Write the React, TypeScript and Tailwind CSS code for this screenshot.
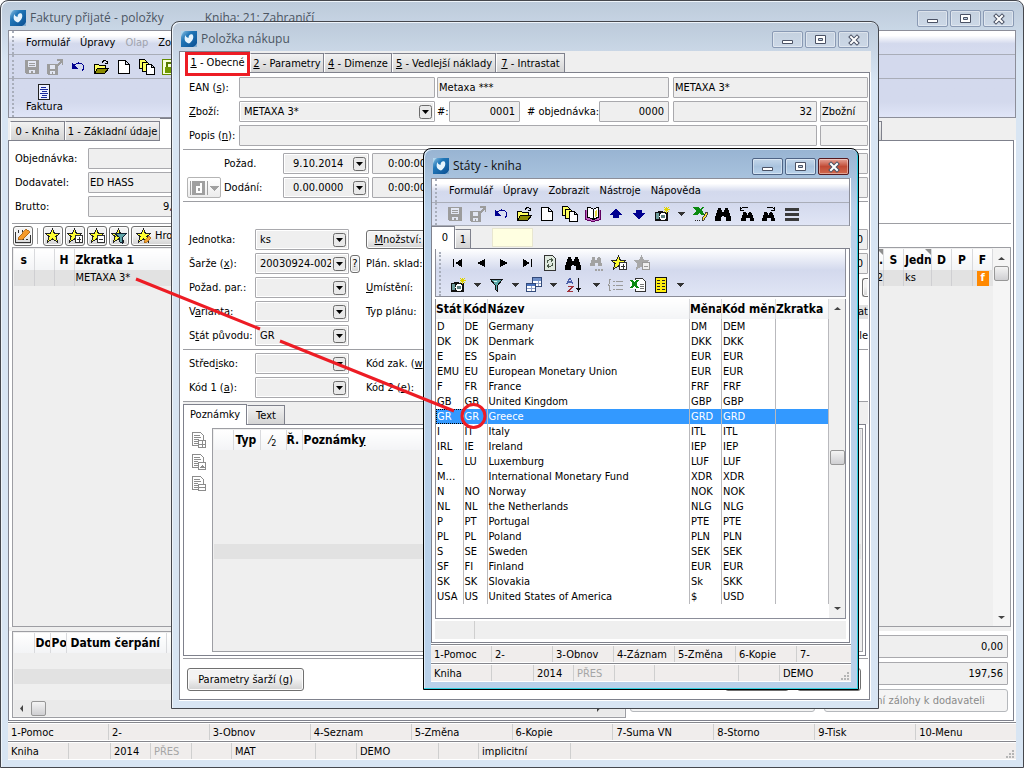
import React from 'react';

type Kids = { children?: React.ReactNode };

/* ---------- icons ---------- */

const binoculars = (c: string) => (
  <path fill={c} d="M3 2h3v2h1v2h2V4h1V2h3v2h1v3h1v3h1v5h-5v-4H9v-1H7v1H6v4H0v-5h1V7h1V4h1z" />
);
const star = (c: string, s: string) => (
  <path d="M7.5 1L9.500 5.500H14.500L11 8.500L12.500 14L7.500 11L2.500 14L4 8.500L.5 5.500H5.500z" fill={c} stroke={s} />
);

const art: Record<string, React.ReactNode> = {
  save: (
    <>
      <path fill="#9c9c9c" d="M1 1h14v14H2l-1-1z" />
      <path fill="#e3e7f3" d="M4 2h8v6H4zM5 11h6v3H9v-2H7v2H5z" />
      <path fill="#9c9c9c" d="M5 4h6v1H5zM5 6h6v1H5z" />
    </>
  ),
  export: (
    <>
      <path fill="#9c9c9c" d="M0 5h11v11H1l-1-1zM10 0h6v6h-1V3l-4 4-2-1 4-4h-3z" />
      <path fill="#e3e7f3" d="M3 6h5v4H3zM3 12h5v3H6v-2H5v2H3z" />
    </>
  ),
  undo: (
    <>
      <path d="M3 8c2-4 6-5 9-3 2 2 2 5 0 7" fill="none" stroke="#000090" />
      <path d="M2 4v6h6z" fill="#000090" />
    </>
  ),
  open: (
    <>
      <path d="M1.500 14V5.500h4l1 1h6V9" fill="#ffff60" stroke="#000" />
      <path d="M1.500 14.500l3-5h11l-4 5z" fill="#8a8a00" stroke="#000" />
      <path d="M9 3.500c2-3 4-2 5.500 0m0-2v3h-3" fill="none" stroke="#000" />
    </>
  ),
  doc: <path d="M2.500 1.500h7l4 4v9h-11zM9.500 1.500v4h4" fill="#fff" stroke="#000" />,
  copies: (
    <>
      <path d="M.5.5h5l2 2v7h-7z" fill="#ffff60" stroke="#000" />
      <path d="M3.500 3.500h5l2 2v7h-7z" fill="#ffff60" stroke="#000" />
      <path d="M7.500 5.500h5l3 3v7h-8zM12.500 5.500v3h3" fill="#fff" stroke="#000" />
    </>
  ),
  green: (
    <>
      <path d="M.5.5h14v15H.5z" fill="#f6ffd8" stroke="#668c00" />
      <path d="M3 8h9v6H3z" fill="#6f9a00" />
      <path d="M5 8V4h5v4" fill="none" stroke="#557a00" strokeWidth="2" />
    </>
  ),
  book: (
    <>
      <path d="M.5 3.500v10l7 2h1l7-2v-10" fill="#c060c0" stroke="#600060" />
      <path d="M2.500 1.500c3-1 4 1 6 2v10c-2-1-3-2-6-2z" fill="#fff" stroke="#000" />
      <path d="M8.500 3.500c2-2 4-2 5-2v10c-2 0-3 1-5 2z" fill="#fff" stroke="#000" />
      <path d="M10 5l2-1v6l-2 1z" fill="#e5d840" />
    </>
  ),
  up: <path fill="#000090" d="M8 3l7 6h-4v3H5V9H1z" />,
  down: <path fill="#000090" d="M8 13l7-6h-4V4H5v3H1z" />,
  camera: (
    <>
      <path fill="#111" d="M1 6h3V5h5v1h5v9H1z" />
      <path fill="#6d9c9c" d="M2 7h3v6H2z" />
      <circle cx="9" cy="10.500" r="3.500" fill="#fff" />
      <circle cx="9" cy="10.500" r="2" fill="#5d8080" />
      <path d="M12.500 1v6M10 3.500h6M10 1l5 5M15 1l-5 5" stroke="#e0d400" />
    </>
  ),
  caret: <path fill="#333" d="M4 6h8L8 10z" />,
  excelpen: (
    <>
      <path fill="#0a8a10" d="M1 1h5l2 2 2-2h2l-2 3 3 5H9L7 7 5 9H1l3-4z" />
      <path d="M10 13l4-7 2 1-4 7-2 1z" fill="#ffe040" stroke="#222" strokeWidth=".8" />
      <path stroke="#222" strokeDasharray="1 1" d="M3 14.500h6" />
    </>
  ),
  find: binoculars('#000'),
  findgray: (
    <>
      <g transform="translate(2 0) scale(.75)">{binoculars('#a2a2a2')}</g>
      <path fill="#a2a2a2" d="M7 14h2v2H7zM10 14h2v2h-2zM13 14h2v2h-2z" />
    </>
  ),
  findprev: (
    <>
      <g transform="translate(3 4) scale(.8 .75)">{binoculars('#000')}</g>
      <path d="M2.500 1v3.500H6M2.500 3.500c2-3 6-3 8-1" fill="none" stroke="#000" />
    </>
  ),
  findnext: (
    <>
      <g transform="translate(1 4) scale(.8 .75)">{binoculars('#000')}</g>
      <path d="M13.500 1v3.500H10M13.500 3.500c-2-3-6-3-8-1" fill="none" stroke="#000" />
    </>
  ),
  lines: <path fill="#3a3a3a" d="M1 2h14v3H1zM1 7h14v3H1zM1 12h14v3H1z" />,
  first: <path fill="#000" d="M3 4h1v8H3zM12 4v8L5 8z" />,
  prev: <path fill="#000" d="M12 4v8L4 8z" />,
  next: <path fill="#000" d="M4 4v8l8-4z" />,
  last: <path fill="#000" d="M12 4h1v8h-1zM4 4v8l7-4z" />,
  refresh: (
    <>
      <path d="M2.500.5h8l3 3v12h-11z" fill="#dfe9df" stroke="#333" />
      <path d="M5 8c0-3 3-4 5-3M11 8c0 3-3 4-5 3" fill="none" stroke="#4a5a4a" />
      <path d="M9 3l3 2-3 2zM7 9l-3 2 3 2z" fill="#4a5a4a" />
    </>
  ),
  star: star('#ffff30', '#222'),
  starplus: (
    <>
      {star('#ffff30', '#222')}
      <path d="M8.500 7.500h7v7h-7z" fill="#fff" stroke="#333" />
      <path d="M12 9v5M10 11.500h4" stroke="#333" />
    </>
  ),
  starminus: (
    <>
      {star('#ffff30', '#222')}
      <path d="M8.500 7.500h7v7h-7z" fill="#fff" stroke="#333" />
      <path d="M10 11.500h4" stroke="#333" />
    </>
  ),
  starminusgray: (
    <>
      {star('#a8a8a8', '#a8a8a8')}
      <path d="M8.500 7.500h7v7h-7z" fill="#eee" stroke="#999" />
      <path d="M10 11.500h4" stroke="#999" />
    </>
  ),
  starfilter: (
    <>
      {star('#ffff30', '#222')}
      <path d="M3.500 5.500h12l-4 4v6l-3-2v-4z" fill="#5fa5a8" stroke="#123" />
    </>
  ),
  starpen: (
    <>
      {star('#ffff30', '#222')}
      <path d="M9 12l4-4 2 2-4 4-3 1z" fill="#f0a030" stroke="#a06010" strokeWidth=".7" />
    </>
  ),
  edit: (
    <>
      <path d="M.5 4v10.500h15V7M3.500 2v3M7.500 2v2M3 11.500h2m2 0h2m2 0h2" fill="none" stroke="#333" />
      <path d="M4 9l7-8 4 3-7 7-5 1z" fill="#f59a2a" stroke="#a86010" strokeWidth=".8" />
    </>
  ),
  filter: (
    <>
      <path d="M2.500 2.500h12l-5 6v6l-2-2v-4z" fill="#58a6a6" stroke="#111" />
      <path d="M5 4h4v1H6z" fill="#d7f2f2" />
    </>
  ),
  tables: (
    <>
      <path d="M6.500.5h9v9h-9z" fill="#fff" stroke="#334a7a" />
      <path d="M7 1h8v3H7z" fill="#6f8fc8" />
      <path d="M.5 6.500h9v8h-9z" fill="#fff" stroke="#334a7a" />
      <path d="M1 7h8v2H1z" fill="#4b73bd" />
      <path d="M1 11.500h8M5.500 9v5M10 6.500h5M12.500 4v5" stroke="#8fa0c8" />
    </>
  ),
  sort: (
    <>
      <path d="M1 7l3-6 3 6M2 5h4" fill="none" stroke="#4b5fa8" strokeWidth="1.300" />
      <path d="M2 9.500h5l-5 5h5" fill="none" stroke="#a03038" strokeWidth="1.300" />
      <path d="M12.500 1v12" stroke="#111" />
      <path d="M10 11h5l-2.500 4z" fill="#111" />
    </>
  ),
  list: (
    <path d="M4 2.500H2.500v4L1 8l1.500 1v4.500H4M6 4.500h2m1 0h7M6 8.500h2m1 0h7M6 12.500h2m1 0h7" fill="none" stroke="#9a9a9a" />
  ),
  excel: (
    <>
      <path d="M5.500 1.500h7l3 3v10h-10z" fill="#fff" stroke="#333" />
      <path d="M10 7.500h4M10 9.500h4M10 11.500h4" stroke="#777" />
      <path d="M0 3h9v9H0z" fill="#fff" />
      <path d="M1 3l7 8M8 3l-7 8" stroke="#0a8a10" strokeWidth="2.400" />
    </>
  ),
  yellow: (
    <>
      <path d="M2.500.5h11v15h-11z" fill="#ffee10" stroke="#111" />
      <path d="M4 3.500h3M4 6.500h3M4 9.500h3M4 12.500h3M9 3.500h3M9 6.500h3M9 9.500h3M9 12.500h3" stroke="#222" />
    </>
  ),
  invoice: (
    <>
      <path d="M2.500.5h11v15h-11z" fill="#eef1ff" stroke="#222" />
      <path d="M5 3.500h5M4 5.500h8M6 7.500h5M4 9.500h8M6 11.500h5M5 13.500h6" stroke="#1a2a9a" />
    </>
  ),
  note1: (
    <>
      <path d="M.5.500h8l3 3v10h-11z" fill="#fff" stroke="#8c8c8c" />
      <path d="M2 3.500h6M2 5.500h7M2 7.500h5M2 9.500h4M2 11.500h4" stroke="#8c8c8c" />
      <path d="M6.500 8.500h7v7h-7zM10.500 8v8M6 12.500h8" fill="#fff" stroke="#8c8c8c" />
    </>
  ),
  note2: (
    <>
      <path d="M.5.500h8l3 3v10h-11z" fill="#fff" stroke="#8c8c8c" />
      <path d="M2 3.500h6M2 5.500h7M2 7.500h4M2 9.500h4M2 11.500h4" stroke="#8c8c8c" />
      <path d="M6.500 8.500h7v7h-7z" fill="#fff" stroke="#8c8c8c" />
      <path d="M8 14l2-3 3 3z" fill="#8c8c8c" />
    </>
  ),
  note3: (
    <>
      <path d="M.5.500h8l3 3v10h-11z" fill="#fff" stroke="#8c8c8c" />
      <path d="M2 3.500h6M2 5.500h7M2 7.500h4M2 9.500h4M2 11.500h4" stroke="#8c8c8c" />
      <path d="M6.500 8.500h7v6h-7zM6 11.500h8" fill="#fff" stroke="#8c8c8c" />
    </>
  ),
};

const Icon = ({ name }: { name: string }) => (
  <svg viewBox="0 0 16 16" shapeRendering="crispEdges" className="size-4 shrink-0" aria-hidden="true">
    {art[name]}
  </svg>
);

const Logo = () => (
  <svg viewBox="0 0 16 16" className="size-4 shrink-0" aria-hidden="true">
    <defs>
      <linearGradient id="logo" x1="0" y1="0" x2="1" y2="1">
        <stop offset="0" stopColor="#8fc3e4" />
        <stop offset=".35" stopColor="#2177b8" />
        <stop offset="1" stopColor="#0b4f92" />
      </linearGradient>
    </defs>
    <path fill="url(#logo)" d="M0 0h16v16H0z" />
    <path fill="#e6f4fd" d="M8 12.500C4 11.500 2.500 8 4.500 4c0 1.500 1.500 2.500 3 3C7.500 4 9.500 2.500 11.500 3.500c2 2.500 0 7-3.500 9z" />
    <path fill="#d6ebf8" d="M0 0h4C2 1 1 3 0 6zM12 16c2-1 3-2 4-4v4z" opacity=".6" />
  </svg>
);

const Grip = () => (
  <span className="mr-1 ml-[3px] w-[3px] self-stretch border-l-2 border-dotted border-[#a8aebb]" />
);

/* ---------- window parts ---------- */

const CaptionButtons = ({ active }: { active?: boolean }) => {
  const tone = active
    ? 'border-[#4f6485] bg-linear-to-b from-[#c4d7ea] via-[#a9c3de] to-[#b9d2ea]'
    : 'border-[#8a9ab4] bg-linear-to-b from-[#c5d1df] to-[#ccd8e7]';
  const close = active
    ? 'border-[#561a20] bg-linear-to-b from-[#e5a297] via-[#c14a35] to-[#d0684d]'
    : 'border-[#8a9ab4] bg-linear-to-b from-[#c5d1df] to-[#ccd8e7]';
  const base = 'flex h-[17px] w-[31px] items-center justify-center rounded-[2px] border shadow-[inset_0_0_0_1px_#ffffff66]';
  return (
    <div className="flex gap-[2px]">
      <button className={`${base} ${tone}`} aria-label="Minimalizovat">
        <svg viewBox="0 0 14 12" className="h-3 w-3.5"><path d="M1.500 6.500h10v3h-10z" fill="#fff" stroke="#4b5265" /></svg>
      </button>
      <button className={`${base} ${tone}`} aria-label="Maximalizovat">
        <svg viewBox="0 0 14 12" className="h-3 w-3.5">
          <path d="M1.500 1.500h10v8h-10z" fill="#fff" stroke="#4b5265" />
          <path d="M4.500 4.500h4v2h-4z" fill="#bfd0e0" stroke="#4b5265" />
        </svg>
      </button>
      <button className={`${base} ${close}`} aria-label="Zavřít">
        <svg viewBox="0 0 14 12" className="h-3 w-3.5">
          <path d="M4 3l6 6M10 3L4 9" stroke="#4b5265" strokeWidth="4" strokeLinecap="square" />
          <path d="M4 3l6 6M10 3L4 9" stroke="#fff" strokeWidth="2" strokeLinecap="square" />
        </svg>
      </button>
    </div>
  );
};

const Frame = ({ title, extra, active, className, children }: Kids & { title: string; extra?: string; active?: boolean; className: string }) => (
  <section
    aria-label={title}
    className={`isolate flex flex-col overflow-hidden rounded-t-lg border px-[7px] pb-[7px] ${
      active
        ? 'border-black bg-[#bbd2eb] bg-linear-to-b from-[#98b4d2] to-[#b9d1ea] to-[60px] shadow-[inset_-1px_-1px_0_#30d0e0,inset_1px_1px_0_#dcebf8]'
        : 'border-[#45474d] bg-[#d8e5f3] bg-linear-to-b from-[#bccada] to-[#d8e5f3] to-[60px] shadow-[inset_1px_1px_0_#eef4fa]'
    } ${className}`}
  >
    <header className="flex h-[29px] shrink-0 items-start px-[2px] pt-[9px]">
      <Logo />
      <h1 className={`ml-1 font-['Open_Sans','Noto_Sans',sans-serif] text-xs leading-4 whitespace-nowrap ${active ? 'text-[#111]' : 'text-[#4c5663]'}`}>{title}</h1>
      {extra && <span className="ml-[41px] font-['Open_Sans','Noto_Sans',sans-serif] text-xs leading-4 whitespace-nowrap text-[#4c5663]">{extra}</span>}
      <div className="ml-auto"><CaptionButtons active={active} /></div>
    </header>
    <div className="flex min-h-0 flex-1 flex-col bg-white">{children}</div>
  </section>
);

const MenuBar = ({ items, disabled }: { items: string[]; disabled?: string }) => (
  <nav className="flex h-6 items-center border-b border-[#a9adb8] bg-linear-to-b from-white from-20% via-[#d3d9ed] via-55% to-[#d6dcef]">
    <Grip />
    <div className="ml-[7px] flex gap-[10px] pt-px">
      {items.map((i) => (
        <button key={i} className={i === disabled ? 'text-[#a0a3ad]' : ''}>{i}</button>
      ))}
    </div>
  </nav>
);

const Tool = ({ name, w = 'w-[23px]' }: { name: string; w?: string }) => (
  <button aria-label={name} className={`flex h-5 shrink-0 items-center justify-center ${w}`}>
    <Icon name={name} />
  </button>
);
const Caret = () => (
  <button aria-label="více" className="flex h-5 w-[15px] shrink-0 items-center justify-center"><Icon name="caret" /></button>
);

const Tab = ({ on, className = '', children }: Kids & { on?: boolean; className?: string }) => (
  <button
    role="tab"
    aria-selected={!!on}
    className={`shrink-0 border-[#7f818c] whitespace-nowrap ${
      on
        ? 'relative z-10 -mb-px self-stretch border-t border-r bg-white'
        : 'h-[19px] border-t border-r border-l border-l-white bg-linear-to-b from-[#f2f2f2] to-[#d4d4d4] pt-[2px]'
    } ${className}`}
  >
    {children}
  </button>
);

const Cells = ({ cells }: { cells: [string, string][] }) => (
  <div className="flex h-[19px] shrink-0 border-t border-[#85868c] bg-white py-px">
    {cells.map(([text, w], i) => (
      <span
        key={i}
        className={`overflow-hidden border-r border-[#cfcfcf] bg-[#f0edec] px-[3px] leading-[17px] last:border-r-0 ${w} ${text === 'PŘES' ? 'text-[#a5a5a5]' : ''}`}
      >
        {text}
      </span>
    ))}
  </div>
);

const SizeGrip = () => (
  <svg viewBox="0 0 10 10" className="absolute right-px bottom-px size-2.5" aria-hidden="true">
    <path fill="#b5b5b5" d="M7 1h2v2H7zM4 4h2v2H4zM7 4h2v2H7zM1 7h2v2H1zM4 7h2v2H4zM7 7h2v2H7z" />
  </svg>
);

/* ---------- form parts ---------- */

const box = 'h-[21px] min-w-0 rounded-[1px] border border-[#a9a9ad] bg-[#efefef] pr-1 text-black';

const Box = ({ id, label, value = '', pad = 'pl-[2px]', className = '' }: { id: string; label?: string; value?: string; pad?: string; className?: string }) => (
  <input id={id} aria-label={label} defaultValue={value} className={`${box} ${pad} ${className}`} />
);

const Arrow = () => (
  <svg viewBox="0 0 13 14" className="pointer-events-none absolute top-1 right-[3px] h-3.5 w-[13px]" aria-hidden="true">
    <rect x=".5" y=".5" width="12" height="13" rx="2" fill="#e9e9e9" stroke="#6c6c6c" />
    <path d="M3 5h7L6.500 9z" fill="#000" />
  </svg>
);

const Combo = ({ id, label, value = '', className = '', inner = 'pl-1' }: { id: string; label?: string; value?: string; className?: string; inner?: string }) => (
  <span className={`relative shrink-0 ${className}`}>
    <select
      id={id}
      aria-label={label}
      defaultValue={value}
      className={`h-[21px] w-full appearance-none overflow-hidden rounded-[1px] border border-[#a9a9ad] bg-[#efefef] pr-[17px] shadow-[inset_0_0_0_1px_#fff] ${inner}`}
    >
      <option>{value}</option>
    </select>
    <Arrow />
  </span>
);

const Lab = ({ htmlFor, className = '', children }: Kids & { htmlFor: string; className?: string }) => (
  <label htmlFor={htmlFor} className={`shrink-0 whitespace-nowrap ${className}`}>{children}</label>
);

const Row = ({ className = '', children }: Kids & { className?: string }) => (
  <div className={`flex h-[21px] shrink-0 items-center ${className}`}>{children}</div>
);

const Rule = ({ className = '' }: { className?: string }) => <hr className={`shrink-0 border-[#9d9ea3] ${className}`} />;

const pushy =
  'rounded-[3px] border border-[#707070] bg-linear-to-b from-[#f3f3f3] from-45% to-[#d2d2d2] shadow-[inset_0_0_0_1px_#fcfcfc]';

const Thumb = () => (
  <span className="block size-[15px] rounded-[2px] border border-[#979797] bg-linear-to-b from-[#f4f4f4] to-[#cfcfd2]" />
);
const Arr = ({ d }: { d: string }) => (
  <svg viewBox="0 0 15 15" className="size-[15px] shrink-0" aria-hidden="true"><path d={d} fill="#444" /></svg>
);
const UP = 'M4 9h7L7.500 6z';
const DOWN = 'M4 6h7L7.500 9z';
const LEFT = 'M9 4v7L6 7.500z';
const RIGHT = 'M6 4v7l3-3.500z';

const headBase = 'overflow-hidden border-r border-[#d9dadd] bg-linear-to-b from-white to-[#f3f4f6] p-0 text-xs font-bold whitespace-nowrap';
const head = `${headBase} text-left`;
const headMid = `${headBase} text-center`;

const Corner = () => (
  <svg viewBox="0 0 6 6" className="absolute top-0 right-0 size-1.5" aria-hidden="true"><path d="M0 0h6v6z" fill="#8f8f8f" /></svg>
);

/* ---------- countries ---------- */

const countries: [string, string, string, string, string][] = [
  ['D', 'DE', 'Germany', 'DM', 'DEM'],
  ['DK', 'DK', 'Denmark', 'DKK', 'DKK'],
  ['E', 'ES', 'Spain', 'EUR', 'EUR'],
  ['EMU', 'EU', 'European Monetary Union', 'EUR', 'EUR'],
  ['F', 'FR', 'France', 'FRF', 'FRF'],
  ['GB', 'GB', 'United Kingdom', 'GBP', 'GBP'],
  ['GR', 'GR', 'Greece', 'GRD', 'GRD'],
  ['I', 'IT', 'Italy', 'ITL', 'ITL'],
  ['IRL', 'IE', 'Ireland', 'IEP', 'IEP'],
  ['L', 'LU', 'Luxemburg', 'LUF', 'LUF'],
  ['M…', '', 'International Monetary Fund', 'XDR', 'XDR'],
  ['N', 'NO', 'Norway', 'NOK', 'NOK'],
  ['NL', 'NL', 'the Netherlands', 'NLG', 'NLG'],
  ['P', 'PT', 'Portugal', 'PTE', 'PTE'],
  ['PL', 'PL', 'Poland', 'PLN', 'PLN'],
  ['S', 'SE', 'Sweden', 'SEK', 'SEK'],
  ['SF', 'FI', 'Finland', 'EUR', 'EUR'],
  ['SK', 'SK', 'Slovakia', 'Sk', 'SKK'],
  ['USA', 'US', 'United States of America', '$', 'USD'],
];

const CountriesWindow = () => (
  <Frame active title="Státy - kniha" className="absolute top-[148px] left-[423px] h-[542px] w-[436px]">
    <div className="mr-px border-x border-t border-[#8c8e99]">
      <MenuBar items={['Formulář', 'Úpravy', 'Zobrazit', 'Nástroje', 'Nápověda']} />
      <div className="flex h-[23px] items-center border-b border-[#a9adb8] bg-linear-to-b from-[#d3d9ed] to-[#e0e5f5]">
        <Grip />
        <div className="ml-px flex items-center">
          {['save', 'export', 'undo', 'open', 'doc', 'copies', 'book', 'up', 'down', 'camera'].map((n) => <Tool key={n} name={n} />)}
          <Caret />
          {['excelpen', 'find', 'findprev', 'findnext', 'lines'].map((n) => <Tool key={n} name={n} />)}
        </div>
      </div>
    </div>
    <div role="tablist" className="flex h-[22px] shrink-0 items-end bg-[#efefef]">
      <Tab on className="w-6 border-l pl-1">0</Tab>
      <Tab className="w-4">1</Tab>
      <input aria-label="Hledat" className="ml-[21px] h-[19px] w-[41px] self-center border border-[#e8e6d0] bg-[#ffffe1]" />
    </div>
    <div className="mr-px flex min-h-0 flex-1 flex-col border border-[#7f818c] px-[3px] pb-[2px]">
      <div className="flex h-12 shrink-0 border border-t-0 border-[#8c8e99] bg-linear-to-b from-white via-[#d3d9ed] via-45% to-[#e0e5f5] pt-[3px]">
        <Grip />
        <div>
          <div className="flex h-[22px] items-center">
            {['first', 'prev', 'next', 'last', 'refresh', 'find', 'findgray', 'starplus', 'starminusgray'].map((n) => <Tool key={n} name={n} />)}
          </div>
          <div className="flex h-[22px] items-center">
            <Tool name="camera" /><Caret />
            <Tool name="filter" /><Caret />
            <Tool name="tables" /><Caret />
            <Tool name="sort" w="w-7" /><Caret />
            <Tool name="list" /><Tool name="excel" /><Tool name="yellow" /><Caret />
          </div>
        </div>
      </div>
      <div className="mt-[2px] flex min-h-0 flex-1 border-r border-b border-l border-[#8c8e99]">
        <div className="min-w-0 flex-1">
          <table className="w-full table-fixed border-collapse">
            <colgroup>
              <col className="w-[27px]" /><col className="w-6" /><col /><col className="w-8" /><col className="w-[54px]" /><col className="w-[53px]" />
            </colgroup>
            <thead>
              <tr className="h-5">
                {['Stát', 'Kód', 'Název', 'Měna', 'Kód měny', 'Zkratka'].map((h) => (
                  <th key={h} className={head}>{h}</th>
                ))}
              </tr>
            </thead>
            <tbody>
              {countries.map((r) => {
                const sel = r[0] === 'GR';
                return (
                  <tr key={r[0]} className={`h-[15px] leading-[15px] ${sel ? 'bg-[#3399ff] text-white' : ''}`}>
                    {[...r, ''].map((c, i) => (
                      <td
                        key={i}
                        className={`overflow-hidden border-r border-[#b9b9bd] p-0 pl-px whitespace-nowrap ${
                          sel && i === 0 ? 'outline-1 -outline-offset-1 outline-dotted outline-black' : ''
                        }`}
                      >
                        {c}
                      </td>
                    ))}
                  </tr>
                );
              })}
            </tbody>
          </table>
        </div>
        <div className="flex w-4 flex-col items-center bg-[#f0f0f0] pt-[2px] pb-[2px]">
          <Arr d={UP} />
          <span className="flex-[133]" /><Thumb /><span className="flex-[135]" />
          <Arr d={DOWN} />
        </div>
      </div>
      <div className="mt-[2px] mb-px flex h-[18px] shrink-0 bg-[#efefef]">
        <span className="w-10 border-r border-[#cfcfcf]" />
      </div>
    </div>
    <div className="relative mt-px">
      <Cells
        cells={[['1-Pomoc', 'w-[61px]'], ['2-', 'w-[61px]'], ['3-Obnov', 'w-[61px]'], ['4-Záznam', 'w-[61px]'], ['5-Změna', 'w-[61px]'], ['6-Kopie', 'w-[61px]'], ['7-', 'flex-1']]}
      />
      <Cells
        cells={[['Kniha', 'w-[61px]'], ['', 'w-[42px]'], ['2014', 'w-10'], ['PŘES', 'w-[41px]'], ['', 'w-10'], ['', 'w-[84px]'], ['', 'w-[41px]'], ['DEMO', 'flex-1']]}
      />
      <SizeGrip />
    </div>
  </Frame>
);

/* ---------- purchase item ---------- */

const ItemWindow = () => (
  <Frame title="Položka nákupu" className="absolute top-[21px] left-[171px] h-[688px] w-[708px]">
    <div role="tablist" className="flex h-[21px] shrink-0 items-end bg-[#efefef]">
      <Tab on className="w-[71px] border-l pl-[6px]">
        <u>1</u> - Obecné
        <span className="absolute top-0 left-[5px] h-6 w-[65px] border-3 border-[#ed1c24]" />
      </Tab>
      <Tab className="w-[74px]"><u>2</u> - Parametry</Tab>
      <Tab className="w-[68px]"><u>4</u> - Dimenze</Tab>
      <Tab className="w-[104px]"><u>5</u> - Vedlejší náklady</Tab>
      <Tab className="w-[69px]"><u>7</u> - Intrastat</Tab>
    </div>
    <div className="mr-px mb-px flex min-h-0 flex-1 flex-col border border-[#7f818c] pt-1 pr-px pl-[3px]">
      <div className="flex flex-col gap-[3px] pl-1.5">
        <Row>
          <Lab htmlFor="ean" className="w-[50px]">EAN (<u>s</u>):</Lab>
          <Box id="ean" className="w-[196px]" />
          <Box id="n1" label="Název 1" value="Metaxa ***" pad="pl-px" className="ml-[2px] w-[232px]" />
          <Box id="n2" label="Název 2" value="METAXA 3*" pad="pl-px" className="ml-1 flex-1" />
        </Row>
        <Row>
          <Lab htmlFor="zb" className="w-[50px]"><u>Z</u>boží:</Lab>
          <Combo id="zb" value="METAXA 3*" className="w-[196px]" />
          <Lab htmlFor="no" className="ml-[2px] w-3">#:</Lab>
          <Box id="no" value="0001" className="w-[71px] text-right" />
          <Lab htmlFor="obj" className="ml-[7px] w-[72px]"># objednávka:</Lab>
          <Box id="obj" value="0000" className="w-[70px] text-right" />
          <Box id="sk" label="Skupina" value="32" className="ml-1 w-36 text-right" />
          <Box id="dr" label="Druh" value="Zbožní" pad="pl-px" className="ml-[3px] flex-1" />
        </Row>
        <Row>
          <Lab htmlFor="pop" className="w-[50px]">Popis (<u>n</u>):</Lab>
          <Box id="pop" className="w-[578px]" />
          <Box id="pop2" label="Popis 2" className="ml-[3px] flex-1" />
        </Row>
      </div>
      <Rule className="mt-[3px] mb-[3px]" />
      <div className="flex flex-col gap-[3px]">
        <Row>
          <Lab htmlFor="poz" className="ml-[41px] w-[59px]">Požad.</Lab>
          <Combo id="poz" value="9.10.2014" className="w-[86px]" inner="pl-[9px]" />
          <Box id="poz2" label="Čas požadavku" value="0:00:00" pad="pl-[15px]" className="ml-[3px] w-[70px]" />
          <Box id="poz3" label="Poznámka požadavku" className="ml-1 flex-1" />
        </Row>
        <Row>
          <button aria-label="Den" className="ml-1 flex h-[21px] w-[34px] items-center rounded-[2px] border border-[#b4b4b4] bg-linear-to-b from-white to-[#ececec] pl-[2px]">
            <svg viewBox="0 0 30 16" shapeRendering="crispEdges" className="h-4 w-[30px]" aria-hidden="true">
              <path fill="#a0a0a0" d="M0 1h1v14H0zM2 1h13v14H2zM17 1h1v14h-1zM20 6h9l-4.500 5z" />
              <path fill="#fff" d="M10 3h2v10H6V6h4zM8 8v3h2V8z" />
            </svg>
          </button>
          <Lab htmlFor="dod" className="ml-[3px] w-[59px]">Dodání:</Lab>
          <Combo id="dod" value="0.00.0000" className="w-[86px]" inner="pl-[9px]" />
          <Box id="dod2" label="Čas dodání" value="0:00:00" pad="pl-[15px]" className="ml-[3px] w-[70px]" />
          <Box id="dod3" label="Poznámka dodání" className="ml-1 flex-1" />
        </Row>
      </div>
      <Rule className="mt-[3px] mb-[27px]" />
      <div className="flex flex-col gap-[3px] pl-1.5">
        <Row>
          <Lab htmlFor="jed" className="w-[66px]"><u>J</u>ednotka:</Lab>
          <Combo id="jed" value="ks" className="w-[94px]" />
          <button className={`${pushy} ml-[17px] h-[19px] w-16`}><u>M</u>nožství:</button>
          <Box id="mn" label="Množství" value="0" className="ml-3 flex-1 text-right" />
        </Row>
        <Row>
          <Lab htmlFor="sar" className="w-[66px]">Šarže (<u>x</u>):</Lab>
          <Combo id="sar" value="20030924-002" className="w-[94px]" />
          <button className={`${pushy} ml-px h-[18px] w-[10px] text-center`}>?</button>
          <Lab htmlFor="skl" className="ml-1.5 w-[78px]">Plán. sklad:</Lab>
          <Box id="skl" value="0" className="flex-1 text-right" />
        </Row>
        <Row>
          <Lab htmlFor="par" className="w-[66px]">Požad. par.:</Lab>
          <Combo id="par" className="w-[94px]" />
          <Lab htmlFor="umi" className="ml-[17px] w-[78px]"><u>U</u>místění:</Lab>
          <Combo id="umi" className="w-[94px]" />
          <button aria-label="Výběr" className={`${pushy} ml-auto h-[19px] w-[6px] rounded-r-none border-r-0`} />
        </Row>
        <Row>
          <Lab htmlFor="var" className="w-[66px]">V<u>a</u>rianta:</Lab>
          <Combo id="var" className="w-[94px]" />
          <Lab htmlFor="typ" className="ml-[17px] w-[78px]">Typ plánu:</Lab>
          <Combo id="typ" className="w-[94px]" />
          <span className="ml-auto bg-[#e2e2e2]">at</span>
        </Row>
        <Row>
          <Lab htmlFor="stat" className="w-[66px]">S<u>t</u>át původu:</Lab>
          <Combo id="stat" value="GR" className="w-[94px]" />
          <span className="ml-auto">le</span>
        </Row>
      </div>
      <Rule className="mt-[3px] mb-[3px]" />
      <div className="flex flex-col gap-[3px] pl-1.5">
        <Row>
          <Lab htmlFor="str" className="w-[66px]">Střed<u>i</u>sko:</Lab>
          <Combo id="str" className="w-[94px]" />
          <Lab htmlFor="zak" className="ml-[17px] w-[78px]">Kód zak. (<u>w</u>):</Lab>
          <Combo id="zak" className="w-[94px]" />
        </Row>
        <Row>
          <Lab htmlFor="k1" className="w-[66px]">Kód 1 (<u>a</u>):</Lab>
          <Combo id="k1" className="w-[94px]" />
          <Lab htmlFor="k2" className="ml-[17px] w-[78px]">Kód 2 (<u>e</u>):</Lab>
          <Combo id="k2" className="w-[94px]" />
        </Row>
      </div>
      <Rule className="mt-[3px]" />
      <div role="tablist" className="flex h-[22px] shrink-0 items-end bg-[#efefef] pt-[2px]">
        <Tab on className="w-16 border-l">Poznámky</Tab>
        <Tab className="w-[38px]">Text</Tab>
      </div>
      <div className="mr-[2px] flex min-h-0 flex-1 border border-[#7f818c] pt-[3px] pr-[2px] pb-[3px]">
        <div className="flex w-7 flex-col items-end gap-1.5 pt-1 pr-[4px]">
          <Icon name="note1" /><Icon name="note2" /><Icon name="note3" />
        </div>
        <div className="flex min-w-0 flex-1 flex-col border border-[#9d9ea3] bg-[#efefef] p-px">
          <table className="w-full table-fixed border-collapse">
            <colgroup><col className="w-[19px]" /><col className="w-[27px]" /><col className="w-[26px]" /><col className="w-4" /><col /></colgroup>
            <thead>
              <tr className="h-5">
                <th className={head} />
                <th className={`${head} pl-[2px]`}>Typ</th>
                <th className={`${headBase} text-center`}>
                  <span className="font-normal">⁄</span><sub className="text-[9px] font-normal">2</sub>
                </th>
                <th className={head}>Ř.</th>
                <th className={`${head} pl-px`}>Poznámk<u>y</u></th>
              </tr>
            </thead>
          </table>
          <span className="mt-[94px] h-[15px] bg-[#e2e2e2]" />
        </div>
      </div>
      <Rule className="mt-[2px]" />
      <div className="flex h-10 shrink-0 items-start gap-2 pt-[9px] pl-1">
        <button className={`${pushy} mr-auto h-[23px] w-[117px]`}>Parametry šarží (<u>g</u>)</button>
        <button className={`${pushy} h-[23px] w-16`}>OK</button>
        <button className={`${pushy} mr-[7px] h-[23px] w-16`}>Storno</button>
      </div>
    </div>
  </Frame>
);

/* ---------- main window ---------- */

const squareButton = `${pushy} flex h-5 w-5 shrink-0 items-center justify-center`;
const dimButton = 'h-[23px] min-w-0 flex-1 rounded-[3px] border border-[#b5b8bc] bg-[#f4f4f4] text-[#8a8a8a]';

const InvoiceWindow = () => (
  <Frame title="Faktury přijaté - položky" extra="Kniha: 21: Zahraničí" className="min-h-screen">
    <div className="shrink-0 border border-[#8c8e99]">
      <MenuBar items={['Formulář', 'Úpravy', 'Olap', 'Zobrazit', 'Nástroje']} disabled="Olap" />
      <div className="flex h-6 items-center border-b border-[#a9adb8] bg-[#d3d9ed]">
        <Grip />
        <div className="ml-px flex items-center">
          {['save', 'export', 'undo', 'open', 'doc', 'copies', 'green'].map((n) => <Tool key={n} name={n} />)}
        </div>
      </div>
      <div className="flex h-[38px] items-center bg-linear-to-b from-[#d3d9ed] from-60% to-[#e0e5f7]">
        <Grip />
        <button className="ml-[7px] flex flex-col items-center leading-[13px]"><Icon name="invoice" />Faktura</button>
      </div>
    </div>
    <div role="tablist" className="flex h-[22px] shrink-0 items-end bg-[#efefef] pl-[2px]">
      <Tab className="w-[55px] border-l-[#7f818c]">0 - Kniha</Tab>
      <Tab className="w-[95px]">1 - Základní údaje</Tab>
      <Tab on className="w-[90px]" />
      <Tab className="w-[632px]" />
    </div>
    <div className="mr-[2px] mb-px flex min-h-0 flex-1 flex-col border border-[#7f818c] pr-[2px] pb-[2px]">
      <div className="flex flex-col gap-[3px] pt-[7px] pl-[6px]">
        <Row><Lab htmlFor="obn" className="w-[73px]">Objednávka:</Lab><Box id="obn" className="w-[120px]" /></Row>
        <Row><Lab htmlFor="dov" className="w-[73px]">Dodavatel:</Lab><Box id="dov" value="ED HASS" pad="pl-px" className="w-[120px]" /></Row>
        <Row><Lab htmlFor="bru" className="w-[73px]">Brutto:</Lab><Box id="bru" value="9,88" className="w-[102px] text-right" /></Row>
      </div>
      <Rule className="mt-[6px] ml-[3px]" />
      <div className="flex h-[23px] shrink-0 items-center gap-[2px] pl-1">
        <button aria-label="Upravit" className={squareButton}><Icon name="edit" /></button>
        <span className="mr-[3px] ml-[2px] h-4 w-px bg-[#a0a0a0]" />
        {['star', 'starplus', 'starminus', 'starfilter'].map((n) => (
          <button key={n} aria-label={n} className={squareButton}><Icon name={n} /></button>
        ))}
        <button className={`${pushy} flex h-5 items-center gap-[3px] px-1`}><Icon name="starpen" />Hromadně</button>
      </div>
      <div className="ml-[3px] flex min-h-0 flex-1 border border-[#9d9ea3] bg-[#efefef]">
        <div className="min-w-0 flex-1 pt-px pl-px">
          <table className="w-full table-fixed border-collapse">
            <colgroup>
              <col className="w-5" /><col className="w-5" /><col className="w-5" /><col /><col className="w-5" /><col className="w-5" />
              <col className="w-7" /><col className="w-5" /><col className="w-[21px]" /><col className="w-5" />
            </colgroup>
            <thead>
              <tr className="h-[21px]">
                <th className={headMid}>s</th>
                <th className={headMid} />
                <th className={headMid}>H</th>
                <th className={`${head} pl-px`}>Zkratka 1</th>
                <th className={`${headBase} relative text-right`}>.<Corner /></th>
                <th className={headMid}>S</th>
                <th className={`${head} relative pl-px`}>Jedn<Corner /></th>
                <th className={headMid}>D</th>
                <th className={headMid}>P</th>
                <th className={headMid}>F</th>
              </tr>
            </thead>
            <tbody>
              <tr className="h-4 bg-[#e2e2e2] leading-4">
                {['', '', '', 'METAXA 3*', '2', '', 'ks', '', ''].map((c, i) => (
                  <td key={i} className={`border-r border-[#cfcfd2] p-0 pl-px ${i === 4 ? 'text-right' : ''}`}>{c}</td>
                ))}
                <td className="p-0">
                  <span className="mx-auto flex h-[15px] w-3 items-center justify-center bg-[#ff8800] font-bold text-white">f</span>
                </td>
              </tr>
            </tbody>
          </table>
        </div>
        <div className="flex w-[17px] flex-col items-center bg-[#f5f5f5] pt-[3px] pb-px">
          <Arr d={UP} />
          <Thumb />
          <span className="flex-1" />
          <Arr d={DOWN} />
        </div>
      </div>
      <div className="h-[4px] shrink-0 bg-[#efefef]" />
      <div className="flex h-[87px] shrink-0 pl-[3px]">
        <div className="flex min-w-0 flex-[617] flex-col border border-[#9d9ea3] bg-[#efefef] p-px">
          <table className="w-full table-fixed border-collapse">
            <colgroup><col className="w-5" /><col className="w-4" /><col className="w-4" /><col className="w-[100px]" /><col /></colgroup>
            <thead>
              <tr className="h-5">
                <th className={head} />
                <th className={`${head} pl-px`}>Do</th>
                <th className={`${head} pl-px`}>Po</th>
                <th className={`${head} pl-1`}>Datum čerpání</th>
                <th className={`${head} pl-1`}>Popis</th>
              </tr>
            </thead>
          </table>
          <span className="mt-4 h-[15px] shrink-0 bg-[#e2e2e2]" />
          <div className="mt-auto flex h-4 items-center gap-[2px] bg-[#eaeaea]">
            <Arr d={LEFT} /><Thumb /><span className="flex-1" /><Arr d={RIGHT} /><span className="w-4" />
          </div>
        </div>
        <div className="flex min-w-0 flex-[382] flex-col gap-1 pt-1 pr-[3px] pl-[4px]">
          <Box id="sum1" label="Součet" value="0,00" className="h-[23px] shrink-0 text-right" />
          <Box id="sum2" label="Celkem" value="197,56" className="h-[23px] shrink-0 text-right" />
          <div className="flex gap-[9px]">
            <button disabled className={dimButton}>Zálohy</button>
            <button disabled className={dimButton}>Čerpání zálohy k dodavateli</button>
          </div>
        </div>
      </div>
    </div>
    <div className="relative">
      <Cells
        cells={[
          ['1-Pomoc', 'flex-1'], ['2-', 'flex-1'], ['3-Obnov', 'flex-1'], ['4-Seznam', 'flex-1'], ['5-Změna', 'flex-1'],
          ['6-Kopie', 'flex-1'], ['7-Suma VN', 'flex-1'], ['8-Storno', 'flex-1'], ['9-Tisk', 'flex-1'], ['10-Menu', 'flex-1'],
        ]}
      />
      <Cells
        cells={[
          ['Kniha', 'w-[61px]'], ['', 'w-[42px]'], ['2014', 'w-10'], ['PŘES', 'w-[41px]'], ['', 'w-10'], ['MAT', 'w-[84px]'],
          ['', 'w-[41px]'], ['DEMO', 'w-[82px]'], ['', 'w-10'], ['implicitní', 'w-[92px]'], ['', 'flex-1'],
        ]}
      />
      <SizeGrip />
    </div>
  </Frame>
);

export default function App() {
  return (
    <main className="relative min-h-screen overflow-hidden bg-white font-['DejaVu_Sans_Condensed','DejaVu_Sans',sans-serif] text-[11px] leading-[14px] text-black">
      <InvoiceWindow />
      <ItemWindow />
      <CountriesWindow />
      <svg viewBox="0 0 1024 768" className="pointer-events-none absolute top-0 left-0 h-[768px] w-[1024px]" aria-hidden="true">
        <g fill="none" stroke="#ed1c24" strokeWidth="3">
          <path d="M136 279l124 50M280 341l174 70" />
          <circle cx="473.500" cy="416" r="11.500" />
        </g>
      </svg>
    </main>
  );
}
